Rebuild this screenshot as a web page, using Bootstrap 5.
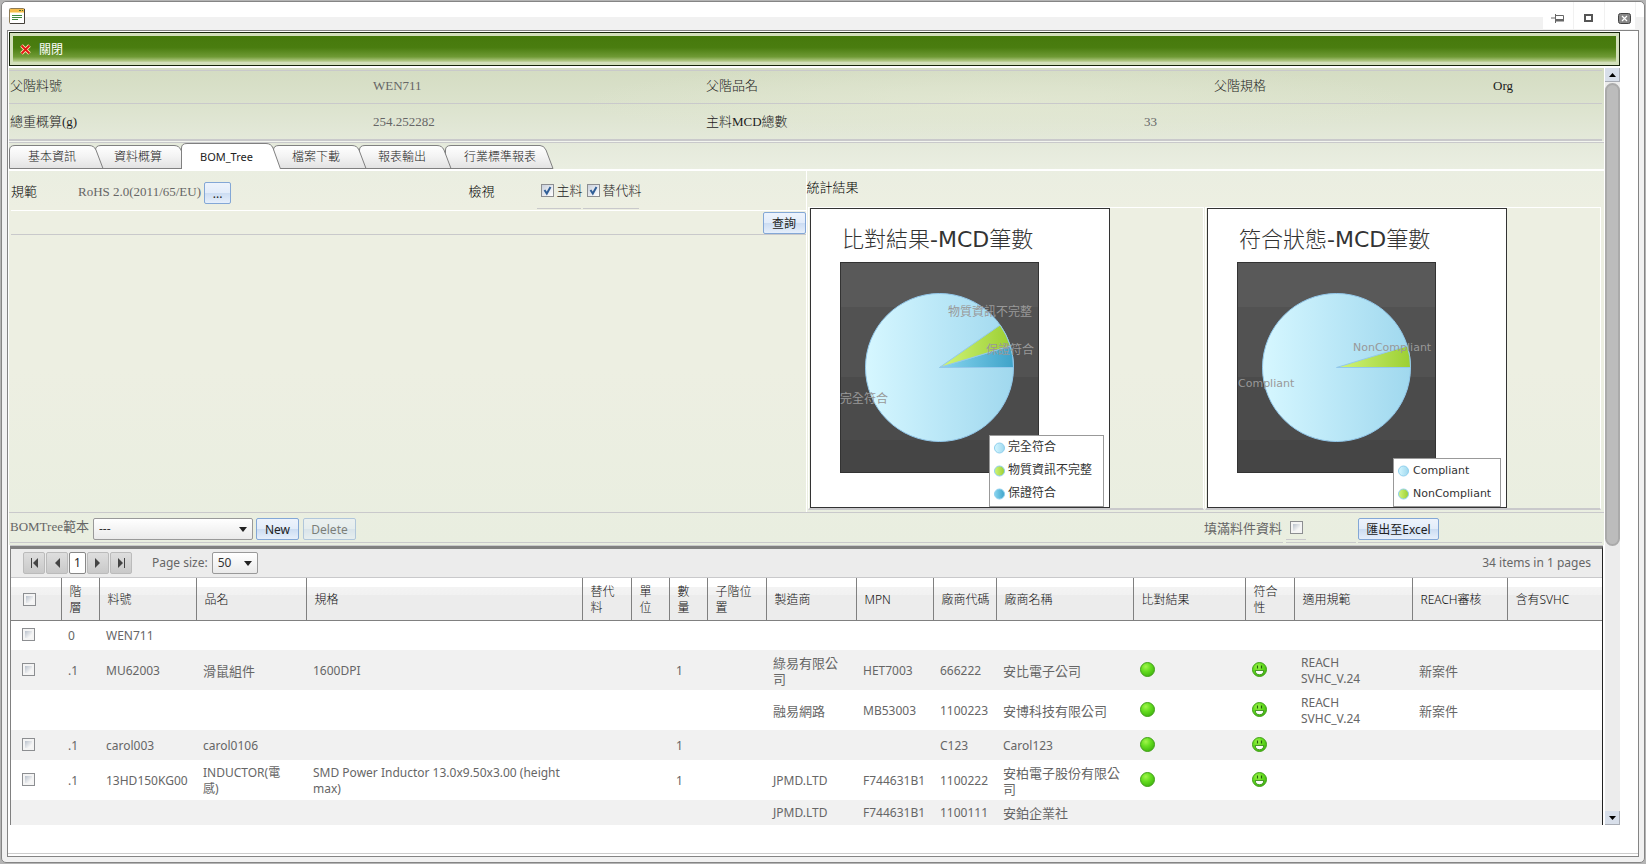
<!DOCTYPE html>
<html lang="zh-Hant">
<head>
<meta charset="utf-8">
<meta name="viewport" content="width=device-width, initial-scale=1">
<title>BOM_Tree</title>
<link rel="stylesheet" href="https://cdn.jsdelivr.net/npm/bootstrap@5.3.0/dist/css/bootstrap.min.css">
<style>
:root{--ui:"Noto Sans","Noto Sans CJK TC",sans-serif;--serif:"Liberation Serif","Noto Sans CJK TC",serif}
body{background:#b4b4b4;font:12px/16px var(--ui);color:#333;min-height:100vh;padding:1px 1px 2px}
button,select,input{font-family:var(--ui)}
.win{border:1px solid #858585;border-radius:5px;background:#f1f1f1;padding:0 5px 5px}
.titlebar{height:28px;margin:0 -5px;padding-left:7px;padding-right:8px;background:linear-gradient(#fff 15px,#f1f1f1 15px);border-radius:5px 5px 0 0}
.winbtn{width:31px;height:27px;padding:4px 0 0;border:0;border-right:1px solid #f1f1f1;background:#fff}
.frame{border:1px solid #848484;background:#fff;padding:1px 18px 0 1px;box-shadow:inset 0 -2px #fff,inset 0 -3px #ccc}
.toolbar-green{height:34px;border:1px solid #16240a;background:#d2dfba;padding:3px}
.toolbar-green>div{height:26px;padding-left:7px;background:linear-gradient(#46790c,#4a7d10 45%,#6f9a35 80%,#a8c279 94%,#c4d3a4)}
.closelink{color:#fff;text-decoration:none;padding-top:1px}
.pane{background:radial-gradient(ellipse 420px 40px at 62% 34px,#e4e9d4aa,#e4e9d400),linear-gradient(#d4dcc2,#dbe2cc 34px,#e4e9da 72px,#eaeee1 100px,#edefe2 140px,#edefe2 300px,#e9eee0 478px)}
.scroller{padding-top:2px}
.info{display:grid;align-items:center;font:13px/18px var(--serif);color:#666;border-bottom:1px solid #c9c9cb;padding-left:1px;margin-right:2px}
.info b{font-weight:300;color:#1c1c1c}
.info1{height:34px;padding-bottom:2px;grid-template-columns:363fr 333fr 508fr 279fr 109fr;border-top:1px solid #c9c9cb}
.info2{height:37px;grid-template-columns:363fr 333fr 438fr 458fr;border-bottom:2px solid #c9c9cb}
.tabs{height:28px;border-top:1px solid #c9c9cb;margin-top:1px;outline:1px solid #fff8;border-bottom:1px solid #fff}
.tabs a{position:relative;isolation:isolate;height:24px;padding-left:19px;color:#222;font-weight:300;text-decoration:none;line-height:24px}
.tabs a.active{height:26px;line-height:28px;font-size:11px;font-weight:400;color:#222}
.tabs svg{position:absolute;left:0;top:0;z-index:-1;overflow:visible}
.t1{width:86px;z-index:6}.t2{width:86px;z-index:5}.t3{width:92px;z-index:9}.t4{width:86px;z-index:4}.t5{width:86px;z-index:3}.t6{width:108px;z-index:2}
.upper{border-top:1px solid #fff;border-bottom:1px solid #c9c9cb;height:343px}
.leftp{width:797px;flex:0 1 50%;border-right:1px solid #fff;padding-left:2px}
.frow{height:40px;border-bottom:1px solid #fff;padding-top:11px}
.serif{font:13px/20px var(--serif);color:#666;white-space:nowrap}
.dark{color:#000;font-weight:300}
.lab{width:67px}
.ul{border-bottom:1px solid #c9c9cb;height:27px;padding-left:4px;line-height:18px;font-weight:300;color:#222}
.ul .ck{margin:2px 3px 0 0}
.fend{height:24px;border-bottom:1px solid #c9c9cb}
.bt{height:22px;border:1px solid #83a7d6;border-radius:2px;background:linear-gradient(#edf3fc 0,#e2ecfa 50%,#cbdcf2 50%,#e6effb 100%);color:#222;font-size:12px;line-height:18px;padding:1px 0 0;text-align:center}
.bt:disabled{opacity:.55}
.ck{appearance:none;width:13px;height:13px;margin:0;border:1px solid #8c8e91;background:linear-gradient(135deg,#b9c1cc,#f6f6f6 75%) 2px 2px/7px 7px no-repeat,#f4f4f4;outline:0;flex:none}
.ck:checked{background:url("data:image/svg+xml,%3Csvg xmlns='http://www.w3.org/2000/svg' viewBox='0 0 11 11'%3E%3Cpath d='M2.5 5l2.3 3.5L8.5 2' fill='none' stroke='%23315f97' stroke-width='2'/%3E%3C/svg%3E"),linear-gradient(135deg,#c8d0dc,#fff)}
.cell{flex:1 1 0;border:1px solid #fff;border-bottom:2px solid #c9c9cb;height:303px;padding:0 0 0 1px}
.cell svg{display:block;background:#fff}
.cell text{font-family:"DejaVu Sans","Noto Sans CJK TC",sans-serif;fill:#333}
.cell .ttl{font-weight:300}
.ttl tspan{font-weight:400}
.cell .l{fill:#999}
.opts{height:31px;padding-left:1px}
.optline{border-bottom:1px solid #c9c9cb;height:30px}
.sel{appearance:none;height:22px;border:1px solid #999;border-radius:2px;color:#333;font-size:12px;padding:0 0 0 5px;background:url("data:image/svg+xml,%3Csvg xmlns='http://www.w3.org/2000/svg' viewBox='0 0 8 5'%3E%3Cpath d='M0 0h8L4 5z' fill='%23222'/%3E%3C/svg%3E") right 5px center/8px 5px no-repeat,linear-gradient(#fff,#eaeaea)}
.gridbox{border:1px solid #808080;border-top:3px solid #808080;border-right:1px solid #222;border-bottom:0;box-shadow:0 -1px #c9c9cb;background:#fff;margin:1px 1px 0}
.pager{height:29px;background:#ececec;border-bottom:1px solid #c9c9cb;color:#666;padding:0 11px 0 12px}
.pg{width:22px;height:22px;border:1px solid #bbb;border-radius:2px;background:linear-gradient(#dedede,#c9c9c9);padding:0;display:flex;align-items:center;justify-content:center}
.pg.cur{width:17px;background:#fff;border-color:#888;color:#222}
.bom{table-layout:fixed;width:100%;margin:0;--bs-table-bg:transparent;color:#666;border:0}
.bom>:not(caption)>*>*{border:0;vertical-align:middle;padding:1px 3px 0 7px;box-shadow:none}
.bom>thead>tr>th{height:42px;font-weight:300;color:#111;border-right:1px solid #808080!important;border-bottom:1px solid #808080!important;padding:2px 4px 0 8px;background:linear-gradient(#fff 9px,#f3f3f3 9px,#f1f1f1 17px,#ececec 17px)}
.bom>thead>tr>th:last-child{border-right:0!important}
.bom td.zh{font-size:13px}
.bom>tbody>tr>td:first-child{padding-left:11px}
.bom>thead>tr>th:first-child{padding-left:12px}
.bom tbody tr{height:30px}.bom tbody tr.tall{height:40px}.bom tbody tr.last{height:25px}
.bom tbody tr:nth-child(even){background:#f1f1f1}
.bom .ck,.bom svg{display:block}
.bom tbody .ck,.bom tbody svg{margin-bottom:3px}
.sbar{width:16px;background:#ececec;margin-left:1px}
.sbar button{width:15px;height:14px;border:0;border-right:1px solid #a9adb5;border-bottom:1px solid #a9adb5;background:#d8dfea;padding:0;display:flex;align-items:center;justify-content:center}
.thumb{width:15px;height:463px;border-radius:8px;background:#bcbcbc;border:2px solid #aaa;margin-top:1px}
.vspace{height:31px}
</style>
</head>
<body>
<svg width="0" height="0" class="position-absolute" aria-hidden="true">
<defs>
<linearGradient id="gb"><stop offset="0" stop-color="#d6f7ff"/><stop offset=".45" stop-color="#bde9f8"/><stop offset="1" stop-color="#a0d8ee"/></linearGradient>
<linearGradient id="gg"><stop offset="0" stop-color="#d2f57a"/><stop offset="1" stop-color="#9ccf33"/></linearGradient>
<linearGradient id="gt"><stop offset="0" stop-color="#88d6f0"/><stop offset="1" stop-color="#3fa3c9"/></linearGradient>
<linearGradient id="tabg" x2="0" y2="1"><stop offset="0" stop-color="#fff"/><stop offset=".5" stop-color="#f3f3f3"/><stop offset="1" stop-color="#e2e2e2"/></linearGradient>
<radialGradient id="ball" cx=".38" cy=".3" r=".75"><stop offset="0" stop-color="#a2f54c"/><stop offset=".45" stop-color="#66de20"/><stop offset="1" stop-color="#3fb30e"/></radialGradient>
<symbol id="dot" viewBox="0 0 15 15"><circle cx="7.500" cy="7.500" r="7" fill="url(#ball)" stroke="#43a01b"/></symbol>
<symbol id="smile" viewBox="0 0 15 15"><circle cx="7.500" cy="7.500" r="7" fill="url(#ball)" stroke="#43a01b"/><path d="M5.500 3.500v3M9.500 3.500v3" stroke="#23600c" stroke-width="1.200"/><path d="M3.300 8.500h8.400c0 2.700-1.700 4.200-4.200 4.200s-4.200-1.500-4.200-4.200z" fill="#fff" stroke="#2f8011" stroke-width=".8"/></symbol>
<g id="plot"><rect x=".5" y=".5" width="299" height="299" fill="#fff" stroke="#333"/><rect x="30" y="54" width="199" height="211" fill="#595959"/><rect x="30" y="99" width="199" height="166" fill="#525252"/><rect x="30" y="169" width="199" height="96" fill="#4b4b4b"/><rect x="30" y="232" width="199" height="33" fill="#454545"/><rect x="30.500" y="54.500" width="198" height="210" fill="none" stroke="#333"/><circle cx="129.500" cy="159.500" r="74" fill="url(#gb)" stroke="#93c9ec"/></g>
</defs>
</svg>
<div class="win">
<header class="titlebar d-flex justify-content-between align-items-start">
<svg class="mt-1" width="16" height="18" viewBox="0 -2 16 18"><rect x=".5" y=".5" width="15" height="15" rx="1" fill="#fff" stroke="#8d7b55"/><path d="M1 1h14v3.500H1z" fill="#f6bd4c"/><path d="M1 4.500h14" stroke="#fbe29c"/><path d="M10 2.500h2M13 2.500h1" stroke="#47752d"/><path d="M3 7.500h10M3 9.500h10M3 11.500h6" stroke="#3f8a3f"/><path d="M15.500 1v14.500H1" fill="none" stroke="#44403a"/></svg>
<div class="d-flex">
<button class="winbtn" aria-label="Pin"><svg width="14" height="10" viewBox="0 0 14 10"><path d="M0 5h4M4.500 1v9M4.500 2.500h8v5h-8" fill="none" stroke="#666"/><path d="M5 6h8v2.500H5z" fill="#666"/></svg></button>
<button class="winbtn" aria-label="Maximize"><svg width="10" height="10" viewBox="0 0 10 10"><rect x="1" y="2" width="7" height="6" fill="none" stroke="#555" stroke-width="2"/></svg></button>
<button class="winbtn ps-2" aria-label="Close"><svg width="13" height="11" viewBox="0 0 13 11"><rect x=".5" y=".5" width="12" height="10" rx="2" fill="#888" stroke="#444"/><path d="M4 3l5 5M9 3L4 8" stroke="#fff" stroke-width="1.200"/></svg></button>
</div>
</header>
<main class="frame">
<div class="toolbar-green"><div class="d-flex align-items-center">
<svg width="11" height="11" viewBox="0 0 11 11" class="me-2"><path d="M1.500 1.500l8 8M9.500 1.500l-8 8" stroke="#ffe9b0" stroke-width="3.600"/><path d="M1.500 1.500l8 8M9.500 1.500l-8 8" stroke="#e01515" stroke-width="1.800"/></svg>
<a href="#" class="closelink">關閉</a></div></div>
<div class="d-flex scroller">
<div class="flex-grow-1" style="min-width:0">
<div class="pane">
<div style="height:2px"></div>
<div class="info info1"><b>父階料號</b><span>WEN711</span><b>父階品名</b><b>父階規格</b><b>Org</b></div>
<div class="info info2"><b>總重概算(g)</b><span>254.252282</span><b>主料MCD總數</b><span>33</span></div>
<nav class="tabs d-flex align-items-end">
<a href="#" class="t1"><svg width="95" height="24"><path d="M.5 23.500V5Q.5.500 6 .500H80Q85 .500 87 5L94 23.500Z" fill="url(#tabg)" stroke="#808080"/></svg>基本資訊</a>
<a href="#" class="t2"><svg width="94" height="24"><path d="M.5 23.500V5Q.5.500 6 .500H79Q84 .500 86 5L93 23.500Z" fill="url(#tabg)" stroke="#808080"/></svg>資料概算</a>
<a href="#" class="t3 active"><svg width="101" height="26"><path d="M.5 26V5Q.5.500 6 .500H85Q90 .500 92 5L99.500 26" fill="#fff" stroke="#808080"/></svg>BOM_Tree</a>
<a href="#" class="t4"><svg width="94" height="24"><path d="M.5 23.500V5Q.5.500 6 .500H79Q84 .500 86 5L93 23.500Z" fill="url(#tabg)" stroke="#808080"/></svg>檔案下載</a>
<a href="#" class="t5"><svg width="93" height="24"><path d="M.5 23.500V5Q.5.500 6 .500H78Q83 .500 85 5L92 23.500Z" fill="url(#tabg)" stroke="#808080"/></svg>報表輸出</a>
<a href="#" class="t6"><svg width="109" height="24"><path d="M.5 23.500V5Q.5.500 6 .500H95Q99 .500 101 5L108 23.500Z" fill="url(#tabg)" stroke="#808080"/></svg>行業標準報表</a>
</nav>
<div class="upper d-flex">
<section class="leftp">
<div class="frow d-flex serif">
<span class="dark lab">規範</span><span>RoHS 2.0(2011/65/EU)</span><button class="bt" style="width:27px;margin-left:3px">...</button>
<div class="flex-grow-1"></div>
<span class="dark" style="width:68px">檢視</span>
<label class="ul d-flex" style="width:44px"><input type="checkbox" class="ck" checked>主料</label>
<label class="ul d-flex" style="width:56px;margin-left:2px;margin-right:167px"><input type="checkbox" class="ck" checked>替代料</label>
</div>
<div class="fend d-flex justify-content-end align-items-end"><button class="bt" style="width:43px">查詢</button></div>
</section>
<section class="flex-grow-1" style="padding-right:3px">
<div class="serif dark" style="height:36px;padding-top:7px">統計結果</div>
<div class="d-flex" style="gap:1px;padding-left:1px">
<div class="cell">
<svg width="300" height="300" viewBox="0 0 300 300" role="img" aria-label="比對結果"><use href="#plot"/>
<path d="M129.500 159.500L200.300 137.900A74 74 0 0 1 203.500 159.500Z" fill="url(#gt)" stroke="#93c9ec"/><path d="M129.500 159.500L190.100 117.100A74 74 0 0 1 200.300 137.900Z" fill="url(#gg)" stroke="#93c9ec"/>
<text class="ttl" x="32" y="39" font-size="22">比對結果<tspan>-MCD</tspan>筆數</text>
<g font-size="12"><text class="l" x="138" y="108">物質資訊不完整</text><text class="l" x="176" y="146">保證符合</text><text class="l" x="30" y="195">完全符合</text>
<rect x="179.500" y="227.500" width="114" height="71" fill="#fff" stroke="#999"/>
<circle cx="189.500" cy="240" r="5" fill="url(#gb)" stroke="#8fd0ee"/><circle cx="189.500" cy="263" r="5" fill="url(#gg)" stroke="#8fd0ee"/><circle cx="189.500" cy="286" r="5" fill="url(#gt)" stroke="#8fd0ee"/>
<text x="198" y="243">完全符合</text><text x="198" y="266">物質資訊不完整</text><text x="198" y="289">保證符合</text></g></svg>
</div>
<div class="cell">
<svg width="300" height="300" viewBox="0 0 300 300" role="img" aria-label="符合狀態"><use href="#plot"/>
<path d="M129.500 159.500L200.300 137.900A74 74 0 0 1 203.500 159.500Z" fill="url(#gg)" stroke="#93c9ec"/>
<text class="ttl" x="32" y="39" font-size="22">符合狀態<tspan>-MCD</tspan>筆數</text>
<g font-size="11"><text class="l" x="146" y="143">NonCompliant</text><text class="l" x="31" y="179">Compliant</text>
<rect x="186.500" y="250.500" width="107" height="48" fill="#fff" stroke="#999"/>
<circle cx="196.500" cy="263" r="5" fill="url(#gb)" stroke="#8fd0ee"/><circle cx="196.500" cy="286" r="5" fill="url(#gg)" stroke="#8fd0ee"/>
<text x="206" y="266">Compliant</text><text x="206" y="289">NonCompliant</text></g></svg>
</div>
</div>
</section>
</div>
<div class="opts d-flex">
<div class="optline d-flex serif flex-grow-1"><label for="tpl" style="width:83px;padding-top:4px">BOMTree範本</label>
<select id="tpl" class="sel" style="width:160px;margin-top:5px"><option>---</option></select>
<button class="bt" style="width:43px;margin:5px 4px 0 3px">New</button><button class="bt" disabled style="width:53px;margin-top:5px">Delete</button></div>
<label for="fill" class="optline serif" style="width:79px;padding-top:6px;margin-right:3px">填滿料件資料</label>
<div class="optline" style="width:70px;margin-right:2px"><div style="width:20px;height:27px;border-bottom:1px solid #c9c9cb;padding:8px 0 0 4px"><input id="fill" type="checkbox" class="ck d-block"></div></div>
<div class="optline" style="width:244px;margin-right:2px"><button class="bt" style="width:81px;margin-top:5px">匯出至Excel</button></div>
</div>
<div style="height:1px"></div>
</div>
<div class="gridbox">
<div class="pager d-flex align-items-center">
<div class="d-flex" style="gap:1px">
<button class="pg" aria-label="First"><svg width="9" height="10"><path d="M1.500 0v10" stroke="#444"/><path d="M8 0v10L3 5z" fill="#444"/></svg></button>
<button class="pg" aria-label="Previous"><svg width="6" height="10"><path d="M6 0v10L1 5z" fill="#444"/></svg></button>
<button class="pg cur">1</button>
<button class="pg" aria-label="Next"><svg width="6" height="10"><path d="M0 0v10l5-5z" fill="#444"/></svg></button>
<button class="pg" aria-label="Last"><svg width="9" height="10"><path d="M7.500 0v10" stroke="#444"/><path d="M1 0v10l5-5z" fill="#444"/></svg></button></div>
<label for="ps" style="margin-left:20px;margin-right:4px">Page size:</label><select id="ps" class="sel" style="width:46px"><option>50</option></select>
<span class="ms-auto">34 items in 1 pages</span>
</div>
<table class="table bom">
<colgroup><col style="width:50px"><col style="width:38px"><col style="width:97px"><col style="width:110px"><col><col style="width:49px"><col style="width:38px"><col style="width:38px"><col style="width:59px"><col style="width:90px"><col style="width:77px"><col style="width:63px"><col style="width:137px"><col style="width:112px"><col style="width:49px"><col style="width:118px"><col style="width:95px"><col style="width:95px"></colgroup>
<thead><tr><th><input type="checkbox" class="ck" aria-label="全選"></th><th>階<br>層</th><th>料號</th><th>品名</th><th>規格</th><th>替代<br>料</th><th>單<br>位</th><th>數<br>量</th><th>子階位<br>置</th><th>製造商</th><th>MPN</th><th class="text-nowrap">廠商代碼</th><th>廠商名稱</th><th>比對結果</th><th>符合<br>性</th><th>適用規範</th><th>REACH審核</th><th>含有SVHC</th></tr></thead>
<tbody>
<tr><td><input type="checkbox" class="ck" aria-label="WEN711"></td><td>0</td><td>WEN711</td><td></td><td></td><td></td><td></td><td></td><td></td><td></td><td></td><td></td><td></td><td></td><td></td><td></td><td></td><td></td></tr>
<tr class="tall"><td><input type="checkbox" class="ck" aria-label="MU62003"></td><td>.1</td><td>MU62003</td><td class="zh">滑鼠組件</td><td>1600DPI</td><td></td><td></td><td>1</td><td></td><td class="zh">綠易有限公<br>司</td><td>HET7003</td><td>666222</td><td class="zh">安比電子公司</td><td><svg width="15" height="15"><use href="#dot"/></svg></td><td><svg width="15" height="15"><use href="#smile"/></svg></td><td>REACH<br>SVHC_V.24</td><td class="zh">新案件</td><td></td></tr>
<tr class="tall"><td></td><td></td><td></td><td></td><td></td><td></td><td></td><td></td><td></td><td class="zh">融易網路</td><td>MB53003</td><td>1100223</td><td class="zh">安博科技有限公司</td><td><svg width="15" height="15"><use href="#dot"/></svg></td><td><svg width="15" height="15"><use href="#smile"/></svg></td><td>REACH<br>SVHC_V.24</td><td class="zh">新案件</td><td></td></tr>
<tr><td><input type="checkbox" class="ck" aria-label="carol003"></td><td>.1</td><td>carol003</td><td>carol0106</td><td></td><td></td><td></td><td>1</td><td></td><td></td><td></td><td>C123</td><td>Carol123</td><td><svg width="15" height="15"><use href="#dot"/></svg></td><td><svg width="15" height="15"><use href="#smile"/></svg></td><td></td><td></td><td></td></tr>
<tr class="tall"><td><input type="checkbox" class="ck" aria-label="13HD150KG00"></td><td>.1</td><td>13HD150KG00</td><td>INDUCTOR(電<br>感)</td><td>SMD Power Inductor 13.0x9.50x3.00 (height<br>max)</td><td></td><td></td><td>1</td><td></td><td>JPMD.LTD</td><td>F744631B1</td><td>1100222</td><td class="zh text-nowrap">安柏電子股份有限公<br>司</td><td><svg width="15" height="15"><use href="#dot"/></svg></td><td><svg width="15" height="15"><use href="#smile"/></svg></td><td></td><td></td><td></td></tr>
<tr class="last"><td></td><td></td><td></td><td></td><td></td><td></td><td></td><td></td><td></td><td>JPMD.LTD</td><td>F744631B1</td><td>1100111</td><td class="zh">安鉑企業社</td><td></td><td></td><td></td><td></td><td></td></tr>
</tbody></table>
</div>
</div>
<div class="sbar d-flex flex-column"><button aria-label="Up"><svg width="7" height="4"><path d="M0 4h7L3.500 0z"/></svg></button><div class="thumb"></div><button class="mt-auto" aria-label="Down"><svg width="7" height="4"><path d="M0 0h7L3.500 4z"/></svg></button></div>
</div>
<div class="vspace"></div>
</main>
</div>
<script src="https://cdn.jsdelivr.net/npm/bootstrap@5.3.0/dist/js/bootstrap.bundle.min.js"></script>
</body>
</html>
